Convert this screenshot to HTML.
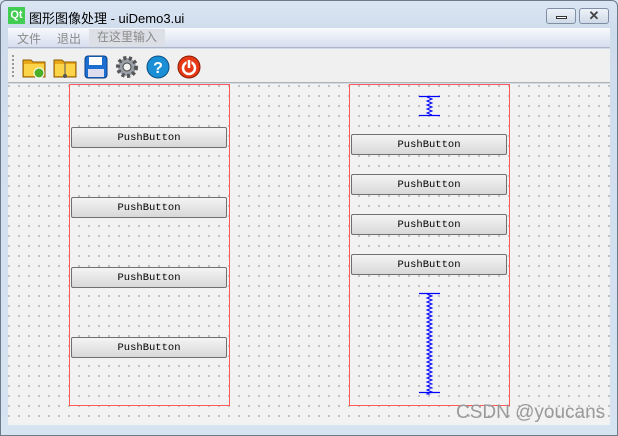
<!DOCTYPE html>
<html><head><meta charset="utf-8"><style>
*{margin:0;padding:0;box-sizing:border-box}
body{width:618px;height:436px;overflow:hidden;background:#d6e3f1;font-family:"Liberation Sans","Noto Sans CJK SC",sans-serif;position:relative}
.frame{position:absolute;left:0;top:0;width:618px;height:436px;border:1px solid #6d7a8a;border-radius:6px 6px 0 0;background:linear-gradient(#dbe6f3,#cfdcec 30px,#d6e3f1)}
.title{position:absolute;left:29px;top:8px;font-size:13px;color:#000}
.qt{position:absolute;left:8px;top:7px;width:17px;height:17px;background:#41cd52;color:#fff;font-size:11px;font-weight:bold;line-height:17px;text-align:center}
.wb{position:absolute;top:8px;width:30px;height:16px;border:1px solid #7f8ea4;border-radius:3px;background:linear-gradient(#eef3f9,#cfdae7)}
.menu{position:absolute;left:8px;top:28px;width:602px;height:20px;background:linear-gradient(#f7f9fc,#d7deef);border-bottom:1px solid #aeb6c4}
.menu span{position:absolute;top:2px;font-size:12px;color:#8a8a8a}
.tool{position:absolute;left:8px;top:49px;width:602px;height:34px;background:#f0f0f0;border-bottom:1px solid #b0b0b0}
.canvas{position:absolute;left:8px;top:84px;width:602px;height:341px;background-color:#f2f2f2;
background-image:radial-gradient(circle,#808080 0.6px,transparent 0.9px);background-size:10px 10px;background-position:-4px -3px}
.box{position:absolute;border:1px solid #ff5a5a;width:161px;height:322px;top:84px;z-index:2}
.btn{position:absolute;z-index:3;width:156px;height:21px;border:1px solid #707070;border-radius:2px;background:linear-gradient(#f4f4f4,#d8d8d8);font-family:"Liberation Mono","DejaVu Sans Mono",monospace;font-size:10.5px;text-align:center;line-height:21px;color:#000}
.ic{position:absolute;top:55px;width:24px;height:24px}
.wm{position:absolute;left:456px;top:402px;font-size:19px;color:#9a9a9a;z-index:4}
</style></head><body>
<div class="frame"></div>
<div class="qt">Qt</div>
<div class="title">图形图像处理 - uiDemo3.ui</div>
<div class="wb" style="left:546px"><div style="position:absolute;left:9px;top:7px;width:11px;height:3px;border:1px solid #333;background:#fff"></div></div>
<div class="wb" style="left:579px;font-size:13px;text-align:center;line-height:13px;font-weight:bold;color:#444">✕</div>
<div class="menu"><span style="left:9px">文件</span><span style="left:49px">退出</span><span style="left:81px;background:#dcdfe6;padding:0 8px;top:1px;line-height:17px">在这里输入</span></div>
<div class="tool"><div style="position:absolute;left:4px;top:6px;width:2px;height:22px;border-left:2px dotted #999"></div></div>
<svg class="ic" style="left:22px" viewBox="0 0 24 24"><path d="M1 5h8l2 2h12v15H1z" fill="#e9a81a" stroke="#8a5d00"/><rect x="2" y="9" width="20" height="12" fill="#fcd44a"/><circle cx="17" cy="18" r="5" fill="#4caf2a" stroke="#fff"/></svg>
<svg class="ic" style="left:53px" viewBox="0 0 24 24"><path d="M1 5h8l2 2h12v15H1z" fill="#e9a81a" stroke="#8a5d00"/><rect x="2" y="9" width="20" height="12" fill="#fcd44a"/><path d="M12 8v14" stroke="#555"/><circle cx="12" cy="21" r="2" fill="#555"/></svg>
<svg class="ic" style="left:84px" viewBox="0 0 24 24"><rect x="1" y="1" width="22" height="22" rx="3" fill="#1a6fd0" stroke="#0b3f85"/><rect x="5" y="2" width="13" height="8" fill="#fff"/><rect x="4" y="14" width="16" height="8" fill="#dde"/></svg>
<svg class="ic" style="left:115px" viewBox="0 0 24 24"><circle cx="12" cy="12" r="9" fill="#9aa0a8" stroke="#555" stroke-width="4" stroke-dasharray="3 2.5"/><circle cx="12" cy="12" r="4" fill="#f0f0f0" stroke="#444"/></svg>
<svg class="ic" style="left:146px" viewBox="0 0 24 24"><circle cx="12" cy="12" r="11" fill="#1b8fd6" stroke="#0b4f80"/><text x="12" y="18" font-size="16" font-weight="bold" fill="#fff" text-anchor="middle" font-family="Liberation Sans">?</text></svg>
<svg class="ic" style="left:177px" viewBox="0 0 24 24"><circle cx="12" cy="12" r="11" fill="#e63a16" stroke="#8a1a00"/><circle cx="12" cy="13" r="6" fill="none" stroke="#fff" stroke-width="2.5"/><path d="M12 4v9" stroke="#e63a16" stroke-width="5"/><path d="M12 5v8" stroke="#fff" stroke-width="2.5"/></svg>
<div class="canvas"></div>
<div class="box" style="left:69px"></div>
<div class="box" style="left:349px"></div>
<div class="btn" style="left:71px;top:127px">PushButton</div>
<div class="btn" style="left:71px;top:197px">PushButton</div>
<div class="btn" style="left:71px;top:267px">PushButton</div>
<div class="btn" style="left:71px;top:337px">PushButton</div>
<div class="btn" style="left:351px;top:134px">PushButton</div>
<div class="btn" style="left:351px;top:174px">PushButton</div>
<div class="btn" style="left:351px;top:214px">PushButton</div>
<div class="btn" style="left:351px;top:254px">PushButton</div>
<svg style="position:absolute;left:418px;top:95px;z-index:3" width="24" height="22"><path d="M1 1.5h21M1 20.5h21" stroke="#00f" stroke-width="1.2"/><path d="M9 2l5 2-5 2 5 2-5 2 5 2-5 2 5 2-5 2 5 2" stroke="#00f" fill="none"/></svg>
<svg style="position:absolute;left:418px;top:292px;z-index:3" width="24" height="103"><path d="M1 1.5h21M1 100.5h21" stroke="#00f" stroke-width="1.2"/><path d="M9 2l5 2-5 2 5 2-5 2 5 2-5 2 5 2-5 2 5 2-5 2 5 2-5 2 5 2-5 2 5 2-5 2 5 2-5 2 5 2-5 2 5 2-5 2 5 2-5 2 5 2-5 2 5 2-5 2 5 2-5 2 5 2-5 2 5 2-5 2 5 2-5 2 5 2-5 2 5 2-5 2 5 2-5 2 5 2-5 2 5 2-5 2 5 2-5 2 5 2-5 2 5 2-5 2 5 2-5 2 5 2-5 2 5 2" stroke="#00f" fill="none"/></svg>
<div class="wm">CSDN @youcans</div>
</body></html>
